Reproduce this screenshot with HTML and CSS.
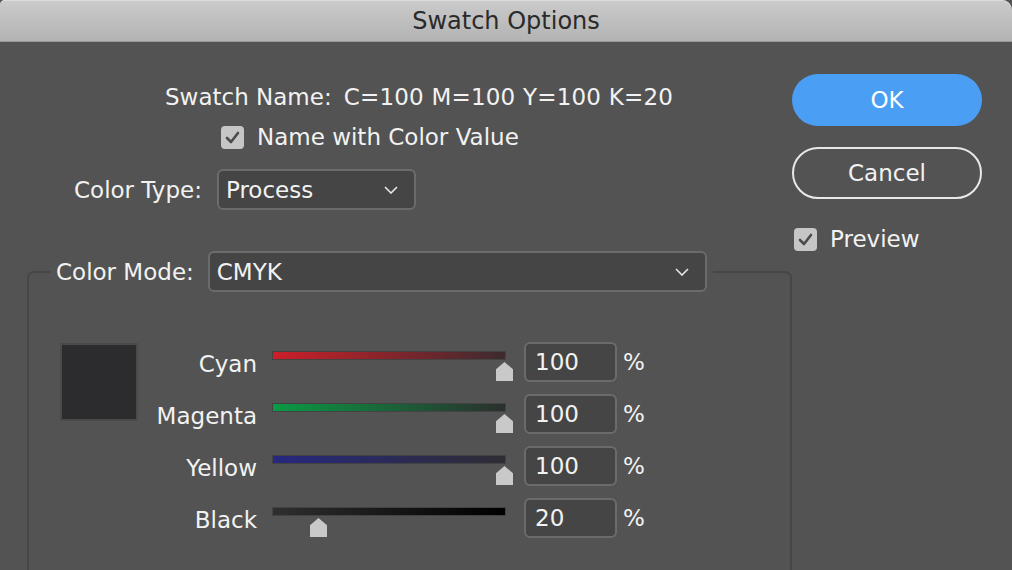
FILE: index.html
```html
<!DOCTYPE html>
<html>
<head>
<meta charset="utf-8">
<link rel="stylesheet" href="styles.css">
</head>
<body>
<div class="titlebar">Swatch Options</div>
<div class="dialog">
  <div class="main">
    <div class="name-row"><span class="lbl">Swatch Name:</span><span class="val">C=100 M=100 Y=100 K=20</span></div>
    <div class="check-row">
      <svg class="check" width="23" height="23" viewBox="0 0 23 23"><rect x="0" y="0" width="23" height="23" rx="4" fill="#c6c6c6"/><polyline points="6,12 10,16 17,7" fill="none" stroke="#4b4b4b" stroke-width="2.6" stroke-linecap="round" stroke-linejoin="round"/></svg>
      <span>Name with Color Value</span>
    </div>
    <div class="type-row">
      <span>Color Type:</span>
      <div class="select type-select"><span>Process</span><svg width="14" height="8" viewBox="0 0 14 8"><polyline points="1,1 7,7 13,1" fill="none" stroke="#e6e6e6" stroke-width="1.6"/></svg></div>
    </div>
    <fieldset class="mode">
      <legend>
        <span>Color Mode:</span>
        <div class="select mode-select"><span>CMYK</span><svg width="14" height="8" viewBox="0 0 14 8"><polyline points="1,1 7,7 13,1" fill="none" stroke="#e6e6e6" stroke-width="1.6"/></svg></div>
      </legend>
      <div class="mixer">
        <div class="swatch"></div>
        <div class="rows">
          <div class="row">
            <span class="clbl">Cyan</span>
            <div class="slider"><div class="bar cyan"></div><div class="thumb" style="margin-left:224px"></div></div>
            <div class="num">100</div><span class="pct">%</span>
          </div>
          <div class="row">
            <span class="clbl">Magenta</span>
            <div class="slider"><div class="bar magenta"></div><div class="thumb" style="margin-left:224px"></div></div>
            <div class="num">100</div><span class="pct">%</span>
          </div>
          <div class="row">
            <span class="clbl">Yellow</span>
            <div class="slider"><div class="bar yellow"></div><div class="thumb" style="margin-left:224px"></div></div>
            <div class="num">100</div><span class="pct">%</span>
          </div>
          <div class="row">
            <span class="clbl">Black</span>
            <div class="slider"><div class="bar black"></div><div class="thumb" style="margin-left:38px"></div></div>
            <div class="num">20</div><span class="pct">%</span>
          </div>
        </div>
      </div>
    </fieldset>
  </div>
  <div class="side">
    <div class="btn ok">OK</div>
    <div class="btn cancel">Cancel</div>
    <div class="preview">
      <svg class="check" width="23" height="23" viewBox="0 0 23 23"><rect x="0" y="0" width="23" height="23" rx="4" fill="#c6c6c6"/><polyline points="6,12 10,16 17,7" fill="none" stroke="#4b4b4b" stroke-width="2.6" stroke-linecap="round" stroke-linejoin="round"/></svg>
      <span>Preview</span>
    </div>
  </div>
</div>
</body>
</html>
```

FILE: styles.css
```css
html { background: #4a4a4a; }
body {
  margin: 0;
  width: 1012px;
  height: 570px;
  overflow: hidden;
  background: #535353;
  font-family: "DejaVu Sans", "Noto Sans", sans-serif;
  font-size: 23px;
  color: #f2f2f2;
}
.titlebar {
  height: 41px;
  border-bottom: 1px solid #979797;
  border-radius: 5px 10px 0 0;
  background: linear-gradient(#cbcbcb, #b3b3b3);
  box-shadow: inset 0 1px 0 #dcdcdc;
  display: flex;
  align-items: center;
  justify-content: center;
  font-size: 24px;
  color: #2a2a2a;
}
.dialog { display: flex; }
.main { width: 792px; }
.side { width: 190px; padding-top: 32px; }

.name-row {
  margin-top: 40px;
  height: 30px;
  line-height: 30px;
  padding-left: 165px;
}
.name-row .val { margin-left: 12px; letter-spacing: 0.2px; }
.check-row {
  margin-top: 10px;
  height: 30px;
  display: flex;
  align-items: center;
  padding-left: 221px;
  gap: 13px;
}
.type-row {
  margin-top: 17px;
  display: flex;
  align-items: center;
  padding-left: 74px;
  gap: 15px;
}
.select {
  box-sizing: border-box;
  height: 41px;
  display: flex;
  align-items: center;
  justify-content: space-between;
  padding: 0 16px 0 7px;
  background: #454545;
  border: 2px solid #6b6b6b;
  border-radius: 6px;
}
.type-select { width: 199px; }
.mode-select { width: 499px; }

.mode {
  margin: 41px 0 0 27px;
  width: 765px;
  height: 319px;
  box-sizing: border-box;
  border: 2px solid #464646;
  border-bottom: none;
  border-radius: 7px 7px 0 0;
  padding: 50px 0 0 31px;
  min-width: 0;
}
.mode legend {
  display: flex;
  align-items: center;
  gap: 14px;
  margin-left: -10px;
  padding: 0 6px;
}
.mixer { display: flex; }
.swatch {
  box-sizing: border-box;
  width: 78px;
  height: 78px;
  margin-top: 1px;
  background: #2c2b2d;
  border: 2px solid #4a4a4a;
}
.row {
  display: flex;
  align-items: flex-start;
  height: 40px;
  margin-bottom: 12px;
}
.clbl {
  width: 119px;
  text-align: right;
  line-height: 44px;
}
.slider {
  width: 234px;
  margin-left: 15px;
  padding-top: 9px;
}
.bar {
  box-sizing: border-box;
  height: 9px;
  border: 1px solid #434343;
}
.cyan { background: linear-gradient(to right, #cc1f28, #3c2b2f); }
.magenta { background: linear-gradient(to right, #0a9a45, #2b2e2d); }
.yellow { background: linear-gradient(to right, #27287f, #2e2d33); }
.black { background: linear-gradient(to right, #2f2e30, #000); }
.thumb {
  width: 17px;
  height: 19px;
  margin-top: 2px;
  background: #c9c9c9;
  clip-path: polygon(50% 0, 100% 38%, 100% 100%, 0 100%, 0 38%);
}
.num {
  box-sizing: border-box;
  width: 93px;
  height: 40px;
  margin-left: 18px;
  padding-left: 9px;
  line-height: 37px;
  background: #454545;
  border: 2px solid #6b6b6b;
  border-radius: 6px;
}
.pct { margin-left: 6px; line-height: 40px; }

.btn {
  box-sizing: border-box;
  height: 52px;
  border-radius: 26px;
  display: flex;
  align-items: center;
  justify-content: center;
}
.ok { background: #4a9ff4; color: #fff; }
.cancel { margin-top: 21px; border: 2px solid #e8e8e8; }
.preview {
  margin-top: 27px;
  padding-left: 2px;
  display: flex;
  align-items: center;
  gap: 13px;
}
```
